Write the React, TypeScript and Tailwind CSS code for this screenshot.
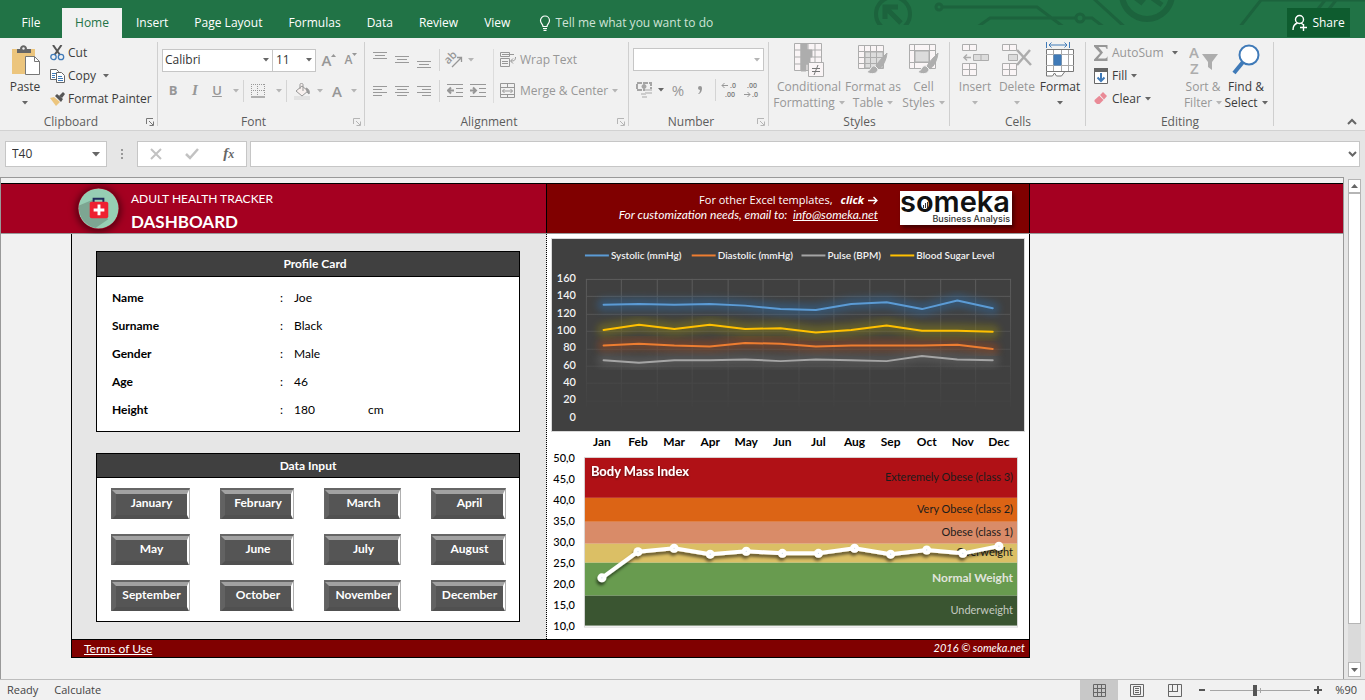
import { ReactNode } from 'react'

const months = ['January', 'February', 'March', 'April', 'May', 'June', 'July', 'August', 'September', 'October', 'November', 'December']

const profile = [
  { label: 'Name', value: 'Joe', unit: '' },
  { label: 'Surname', value: 'Black', unit: '' },
  { label: 'Gender', value: 'Male', unit: '' },
  { label: 'Age', value: '46', unit: '' },
  { label: 'Height', value: '180', unit: 'cm' },
]

const series = [
  { name: 'Systolic (mmHg)', color: '#5b9bd5', glow: '#2f6ca5', x: 33, data: [129, 130, 129, 130, 128, 124, 123, 130, 132, 124, 134, 125] },
  { name: 'Diastolic (mmHg)', color: '#ed7d31', glow: '#a04a1c', x: 140, data: [82, 84, 82, 81, 85, 84, 81, 82, 82, 82, 83, 78] },
  { name: 'Pulse (BPM)', color: '#a5a5a5', glow: '#6a6a6a', x: 250, data: [65, 62, 65, 65, 66, 64, 66, 65, 64, 70, 66, 65] },
  { name: 'Blood Sugar Level', color: '#ffc000', glow: '#8f8410', x: 339, data: [100, 106, 101, 106, 101, 102, 97, 100, 105, 99, 99, 98] },
]

const bands = [
  { label: 'Exteremely Obese (class 3)', y: 0, h: 40, fill: '#b01116', text: '#1c1c1c' },
  { label: 'Very Obese (class 2)', y: 40, h: 24, fill: '#dc6415', text: '#1c1c1c' },
  { label: 'Obese (class 1)', y: 64, h: 22, fill: '#d98b68', text: '#1c1c1c' },
  { label: 'Overweight', y: 86, h: 19, fill: '#dbbf65', text: '#1c1c1c' },
  { label: 'Normal Weight', y: 105, h: 33, fill: '#689b4f', text: '#e0e4dc', bold: true },
  { label: 'Underweight', y: 138, h: 30, fill: '#3a5531', text: '#c4cac0' },
]

const bmi = [21.6, 27.8, 28.6, 27.2, 27.9, 27.4, 27.4, 28.6, 27.2, 28.2, 27.4, 29.1]

function Caret({ color = '#666' }: { color?: string }) {
  return (
    <svg width="6" height="4" viewBox="0 0 6 4" className="shrink-0">
      <path d="M0 0h6L3 3.5z" fill={color} />
    </svg>
  )
}

function Group({ label, width, launcher, children }: { label: string; width: string; launcher?: string; children: ReactNode }) {
  return (
    <section aria-label={label} className={`relative flex h-[92px] shrink-0 flex-col ${width}`}>
      <div className="flex-1 pt-[3px]">{children}</div>
      <div className="flex h-4 items-center justify-center text-[#5c5c5c]">{label}</div>
      {launcher && (
        <button aria-label={`${label} settings`} className="absolute right-1 bottom-1">
          <svg width="8" height="8" viewBox="0 0 8 8" fill="none" stroke={launcher}>
            <path d="M.5 6V.5H7M3 3l4 4M7.5 3.5v4h-4" />
          </svg>
        </button>
      )}
      <span className="absolute top-1 right-0 h-[84px] w-px bg-[#cfcfcf]" />
    </section>
  )
}

function Cell({ label, children, width = 'w-[22px]' }: { label: string; children: ReactNode; width?: string }) {
  return (
    <button aria-label={label} className={`flex h-6 shrink-0 items-center justify-center text-[#979797] ${width}`}>
      {children}
    </button>
  )
}

function Divider() {
  return <span className="h-[22px] w-px shrink-0 bg-[#d4d4d4]" />
}

function Big({ icon, lines, width, dim }: { icon: ReactNode; lines: string[]; width: string; dim?: boolean }) {
  return (
    <button className={`flex shrink-0 flex-col items-center leading-4 ${width} ${dim ? 'text-[#979797]' : 'text-[#3c3c3c]'}`}>
      <span className="flex h-[38px] items-center">{icon}</span>
      <span className="whitespace-nowrap">{lines[0]}</span>
      <span className="flex h-4 items-center gap-1 whitespace-nowrap">
        {lines[1]}
        <Caret color={dim ? '#b5b5b5' : '#666'} />
      </span>
    </button>
  )
}

function Lines({ widths, align = 'left', y = 3 }: { widths: number[]; align?: string; y?: number }) {
  return (
    <svg width="14" height="17" viewBox="0 0 14 17" stroke="#9a9a9a">
      {widths.map((w, i) => {
        const x = align === 'left' ? 0 : align === 'right' ? 14 - w : (14 - w) / 2
        return <path key={i} d={`M${x} ${y + i * 3 + 0.5}h${w}`} />
      })}
    </svg>
  )
}

function Brush() {
  return (
    <>
      <path d="M29 9c-5 5-9 9-11 13l3 3c4-3 7-8 8-16z" fill="#aeaeae" />
      <path d="M17 22c-4-1-4 4-8 6 4 3 11 2 11-3z" fill="#aeaeae" stroke="#f1f1f1" />
    </>
  )
}

function CircuitArt() {
  return (
    <svg width="500" height="25" viewBox="865 0 500 25" fill="none" stroke="#1c633d" strokeWidth="3" className="absolute top-0 right-0" aria-hidden="true">
      <circle cx="893" cy="14" r="17" strokeWidth="4" />
      <path d="M901 23l-14-14M885 19V7h13" strokeWidth="5" />
      <circle cx="939" cy="7" r="3" />
      <path d="M943 7h94l28 21M976 28l14-10h86M1084 18h8l13 10M1093-2l35 32" />
      <circle cx="1080" cy="18" r="4" />
      <circle cx="1147" cy="-6" r="25" strokeWidth="6" />
      <path d="M1133-4l8 6 5-6M1148-5l14 10" strokeWidth="5" />
      <path d="M1239 28l22-28h104M1318 9l8-10M1329 9l8-10" />
    </svg>
  )
}

function TitleBar() {
  const tabs = ['Insert', 'Page Layout', 'Formulas', 'Data', 'Review', 'View']
  return (
    <header className="relative flex h-[38px] items-end bg-[#217346] text-white">
      <CircuitArt />
      <nav className="relative flex h-[30px] items-center">
        <button className="w-[62px] text-center">File</button>
        <button className="h-full w-[60px] bg-[#f1f1f1] text-center text-[#217346]">Home</button>
        <div className="flex pl-px">
          {tabs.map((t) => (
            <button key={t} className="px-[13px]">{t}</button>
          ))}
        </div>
        <button className="flex items-center gap-1 pl-4 text-[#cfe3d7]">
          <svg width="12" height="16" viewBox="1 0 12 16" fill="none" stroke="#fff" strokeWidth="1.200">
            <path d="M5 11.500c0-2.500-2.500-3-2.500-6a4.500 4.500 0 0 1 9 0c0 3-2.500 3.500-2.500 6zM5 13.500h4M5.500 15.300h3" />
          </svg>
          Tell me what you want to do
        </button>
      </nav>
      <button className="relative mr-[15px] mb-px ml-auto flex h-[29px] w-[63px] items-center justify-center gap-1 bg-[#0e5c2f]">
        <svg width="16" height="18" viewBox="0 0 16 18" fill="none" stroke="#fff" strokeWidth="1.400">
          <circle cx="7.500" cy="5.500" r="4" />
          <path d="M5.500 9C2.500 10 1 12 1 16M9 9l2 1.500M11.500 10v7M8 13.500h7" />
        </svg>
        Share
      </button>
    </header>
  )
}

function ClipboardGroup() {
  return (
    <Group label="Clipboard" width="w-[158px] pr-4" launcher="#777">
      <div className="flex">
        <Big
          width="w-[50px]"
          lines={['Paste', '']}
          icon={
            <svg width="30" height="31" viewBox="0 0 30 31">
              <path d="M2 4h23v25H2z" fill="#ecc57d" />
              <path d="M7 8V4h3c0-5 7-5 7 0h4v4z" fill="#666" />
              <circle cx="13.500" cy="3.500" r="1.200" fill="#f1f1f1" />
              <path d="M15.500 11.500h9l5 5v13h-14z" fill="#fff" stroke="#777" />
              <path d="M24.500 11.500v5h5" fill="none" stroke="#777" />
            </svg>
          }
        />
        <div className="text-[#3c3c3c]">
          <button className="flex h-[23px] items-center gap-[3px]">
            <svg width="15" height="16" viewBox="0 0 15 16" fill="none">
              <path d="M3 0l7 10M11.500 0l-7 10" stroke="#555" strokeWidth="2" />
              <circle cx="3.500" cy="12" r="2.700" stroke="#3f7ab8" strokeWidth="1.300" />
              <circle cx="11" cy="12" r="2.700" stroke="#3f7ab8" strokeWidth="1.300" />
            </svg>
            Cut
          </button>
          <button className="flex h-[23px] items-center gap-[3px]">
            <svg width="15" height="14" viewBox="0 0 15 14" fill="#fff" stroke="#666">
              <path d="M.5.500h6l2 2v8h-8z" />
              <path d="M2 4.500h4M2 6.500h3M2 8.500h3" stroke="#3f7ab8" />
              <path d="M6.500 3.500h5l3 3v7h-8z" />
              <path d="M8 7.500h4M8 9.500h5M8 11.500h5" stroke="#3f7ab8" />
            </svg>
            Copy
            <span className="pl-1"><Caret /></span>
          </button>
          <button className="flex h-[23px] items-center gap-[3px] whitespace-nowrap">
            <svg width="15" height="14" viewBox="0 0 15 14">
              <path d="M0 6l4-1 6 5-4 4z" fill="#ecc57d" />
              <path d="M5 4l2-2 6 5-2 3z" fill="#555" />
              <path d="M9 4l4-4 2 2-3 4z" fill="#555" />
            </svg>
            Format Painter
          </button>
        </div>
      </div>
    </Group>
  )
}

function FontGroup() {
  return (
    <Group label="Font" width="w-[207px] pr-4" launcher="#b5b5b5">
      <div className="flex items-center pt-[7px] pl-1">
        <div className="relative flex items-center">
          <select aria-label="Font name" className="h-[23px] w-[111px] appearance-none border border-[#c6c6c6] bg-white pl-[2px] text-[#333]">
            <option>Calibri</option>
          </select>
          <span className="pointer-events-none absolute right-1"><Caret /></span>
        </div>
        <div className="relative flex items-center">
          <select aria-label="Font size" className="h-[23px] w-[43px] appearance-none border border-l-0 border-[#c6c6c6] bg-white pl-[3px] text-[#333]">
            <option>11</option>
          </select>
          <span className="pointer-events-none absolute right-1"><Caret /></span>
        </div>
        <Cell label="Increase font size">
          <span className="pl-1 text-[15px] font-semibold">A</span>
          <svg width="5" height="12" viewBox="0 0 5 12"><path d="M0 3h5L2.500 0z" fill="#979797" /></svg>
        </Cell>
        <Cell label="Decrease font size">
          <span className="pl-1 text-xs font-semibold">A</span>
          <svg width="5" height="14" viewBox="0 0 5 14"><path d="M0 0h5L2.500 3z" fill="#979797" /></svg>
        </Cell>
      </div>
      <div className="flex items-center pt-[7px] pl-1">
        <Cell label="Bold"><b className="text-[13px]">B</b></Cell>
        <Cell label="Italic"><i className="font-['Liberation_Serif',serif] text-[15px] font-bold">I</i></Cell>
        <Cell label="Underline"><u className="text-[13px] font-semibold">U</u></Cell>
        <Cell label="Underline styles" width="w-[15px]"><Caret color="#b5b5b5" /></Cell>
        <Divider />
        <Cell label="Borders" width="w-[28px]">
          <svg width="14" height="14" viewBox="0 0 14 14" fill="none" stroke="#999">
            <path d="M.5 0v12M6.500 0v12M13.500 0v12M0 .5h14M0 6.500h14" strokeDasharray="1 1" />
            <path d="M0 13h14" strokeWidth="1.500" />
          </svg>
        </Cell>
        <Cell label="Border styles" width="w-[14px]"><Caret color="#b5b5b5" /></Cell>
        <Divider />
        <Cell label="Fill color" width="w-[30px]">
          <svg width="17" height="17" viewBox="0 0 17 17" fill="none" stroke="#999">
            <path d="M0 15h16" strokeWidth="4" stroke="#e2e2e2" />
            <path d="M2 8l6-5 6 5-6 5zM6 6V1.500C6 0 9 0 9 1.500V8" fill="#f7f0ee" />
            <path d="M12 5c3 1 4 4 3 6-2-1-2-3-3-6z" fill="#999" />
          </svg>
        </Cell>
        <Cell label="Fill colors" width="w-[6px]"><Caret color="#b5b5b5" /></Cell>
        <Cell label="Font color" width="w-[28px]"><span className="text-[15px] font-semibold">A</span></Cell>
        <Cell label="Font colors" width="w-[6px]"><Caret color="#b5b5b5" /></Cell>
      </div>
    </Group>
  )
}

function AlignmentGroup() {
  return (
    <Group label="Alignment" width="w-[264px] pr-4" launcher="#b5b5b5">
      <div className="flex pl-1 text-[#979797]">
        <div className="flex flex-col gap-[7px] pt-[7px]">
          <div className="flex items-center">
            <Cell label="Top align"><Lines widths={[14, 10, 14]} align="center" y={0} /></Cell>
            <Cell label="Middle align"><Lines widths={[14, 10, 14]} align="center" y={4} /></Cell>
            <Cell label="Bottom align"><Lines widths={[14, 10, 14]} align="center" y={9} /></Cell>
            <span className="pl-1" />
            <Divider />
            <Cell label="Orientation" width="w-[28px]">
              <svg width="20" height="20" viewBox="0 0 20 20" fill="none" stroke="#979797" className="overflow-visible">
                <text x="1" y="11" transform="rotate(-45 7 9)" fontSize="11" fontWeight="600" fill="#979797" stroke="none">ab</text>
                <path d="M8 17l9-9M13 7.500h4.500V12" strokeWidth="1.300" />
              </svg>
            </Cell>
            <Caret color="#b5b5b5" />
          </div>
          <div className="flex items-center">
            <Cell label="Align left"><Lines widths={[14, 9, 14, 9]} /></Cell>
            <Cell label="Center"><Lines widths={[14, 10, 14, 10]} align="center" /></Cell>
            <Cell label="Align right"><Lines widths={[14, 9, 14, 9]} align="right" /></Cell>
            <span className="pl-1" />
            <Divider />
            <Cell label="Decrease indent" width="w-[30px]">
              <svg width="17" height="14" viewBox="0 0 17 14" stroke="#979797" fill="none">
                <path d="M0 .5h16M9 4.500h7M9 8.500h7M0 12.500h16" />
                <path d="M1 6.500h6M4 3.500l-3 3 3 3" strokeWidth="2" />
              </svg>
            </Cell>
            <Cell label="Increase indent" width="w-[17px]">
              <svg width="17" height="14" viewBox="0 0 17 14" stroke="#979797" fill="none">
                <path d="M0 .5h16M9 4.500h7M9 8.500h7M0 12.500h16" />
                <path d="M0 6.500h6M3 3.500l3 3-3 3" strokeWidth="2" />
              </svg>
            </Cell>
          </div>
        </div>
        <span className="mt-2 ml-auto h-[54px] w-px shrink-0 bg-[#dcdcdc]" />
        <div className="-mr-4 flex w-[135px] shrink-0 flex-col gap-[7px] pt-[7px] pl-[6px]">
          <button className="flex h-6 items-center gap-1 whitespace-nowrap">
            <svg width="16" height="16" viewBox="0 0 16 16" stroke="#979797" fill="none">
              <path d="M.5.500h9v4h-9zM2 2.500h12M.5 6.500h9v8h-9zM2 9.500h6M2 11.500h6M15.500 5c0 3-1 4-4.500 4M13 6.500L10.500 9l2.500 2.500" />
            </svg>
            Wrap Text
          </button>
          <button className="flex h-6 items-center gap-1 whitespace-nowrap">
            <svg width="16" height="16" viewBox="0 0 16 16" stroke="#979797" fill="none">
              <path d="M.5.500h14v14H.5zM.5 4.500h14M.5 11.500h14M7.500 0v4M7.500 11v4M2.500 8h10M4.500 6L2.500 8l2 2M10.500 6l2 2-2 2" />
            </svg>
            Merge &amp; Center
            <Caret color="#b5b5b5" />
          </button>
        </div>
      </div>
    </Group>
  )
}

function NumberGroup() {
  return (
    <Group label="Number" width="w-[140px] pr-4" launcher="#b5b5b5">
      <div className="-mr-4 flex flex-col gap-[7px] pt-[7px] pl-1">
        <div className="relative flex h-[23px] w-[131px] items-center">
          <select aria-label="Number format" className="h-[23px] w-full appearance-none border border-[#c6c6c6] bg-white" defaultValue="">
            <option value="" aria-label="None"></option>
          </select>
          <span className="pointer-events-none absolute right-1"><Caret color="#b5b5b5" /></span>
        </div>
        <div className="flex items-center">
          <Cell label="Accounting format">
            <svg width="17" height="16" viewBox="0 0 17 16" fill="none" stroke="#a5a5a5">
              <path d="M1 1h14v7H1z" strokeWidth="2" strokeDasharray="5 1" />
              <circle cx="8" cy="4.500" r="2" fill="#a5a5a5" />
              <path d="M9 8h7M9 11h7M5 12h5M6 15h5" stroke="#ccc" strokeWidth="2" />
            </svg>
          </Cell>
          <Cell label="Currencies" width="w-[12px]"><Caret /></Cell>
          <Cell label="Percent"><span className="text-[15px]">%</span></Cell>
          <Cell label="Comma">
            <svg width="6" height="8" viewBox="0 0 6 8"><path d="M1 2a2 2 0 1 1 4 0c0 3-1 5-3 6H1c1-1 2-2 2-4-1 0-2-1-2-2z" fill="#979797" /></svg>
          </Cell>
          <span className="pl-1" />
          <Divider />
          <Cell label="Increase decimal" width="w-[26px]">
            <svg width="16" height="18" viewBox="0 0 16 18" fill="#7a7a7a" fontSize="7" fontWeight="600">
              <text x="9" y="7">.0</text>
              <text x="4" y="16">.00</text>
              <path d="M1 4.500h6M3.500 2L1 4.500 3.500 7" fill="none" stroke="#979797" />
            </svg>
          </Cell>
          <Cell label="Decrease decimal" width="w-[18px]">
            <svg width="16" height="18" viewBox="0 0 16 18" fill="#7a7a7a" fontSize="7" fontWeight="600">
              <text x="4" y="7">.00</text>
              <text x="9" y="16">.0</text>
              <path d="M1 13.500h6M4.500 11L7 13.500 4.500 16" fill="none" stroke="#979797" />
            </svg>
          </Cell>
        </div>
      </div>
    </Group>
  )
}

function StylesGroup() {
  return (
    <Group label="Styles" width="w-[181px]">
      <div className="flex pl-[6px]">
        <Big
          dim
          width="w-[68px]"
          lines={['Conditional', 'Formatting']}
          icon={
            <svg width="30" height="34" viewBox="0 0 30 34" fill="#faf5f6" stroke="#adadad">
              <path d="M.5.500h27v27H.5z" />
              <path d="M7 0h6v7H7zM7 7h11v7H7zM7 14h9v7H7zM7 21h5v7H7z" fill="#adadad" />
              <path d="M0 7h28M0 14h28M0 21h28M7 0v28M14 0v28M21 0v28" />
              <path d="M14.500 19.500h15v14h-15z" />
              <path d="M18 25.500h8M18 28.500h8M24 22l-4 10" stroke="#777" />
            </svg>
          }
        />
        <Big
          dim
          width="w-[60px]"
          lines={['Format as', 'Table']}
          icon={
            <svg width="30" height="32" viewBox="0 0 30 32" fill="#faf5f6" stroke="#adadad">
              <path d="M.5 1.500h25v23H.5z" />
              <path d="M7 8h18v16H7z" fill="#dcdcdc" />
              <path d="M0 7.500h26M0 13.500h26M0 19.500h26M6.500 1v23M12.500 1v23M18.500 1v23" />
              <Brush />
            </svg>
          }
        />
        <Big
          dim
          width="w-[41px]"
          lines={['Cell', 'Styles']}
          icon={
            <svg width="30" height="32" viewBox="0 0 30 32" fill="#faf5f6" stroke="#adadad">
              <path d="M.5.500h26v24H.5zM0 6.500h27M0 18.500h27M5.500 0v24M20.500 0v24" />
              <path d="M6 7h14v11H6z" fill="#dcdcdc" />
              <Brush />
            </svg>
          }
        />
      </div>
    </Group>
  )
}

function CellsGroup() {
  return (
    <Group label="Cells" width="w-[136px]">
      <div className="flex pl-1">
        <Big
          dim
          width="w-[42px]"
          lines={['Insert', '']}
          icon={
            <svg width="27" height="32" viewBox="0 0 27 32" fill="#faf5f6" stroke="#adadad">
              <path d="M.5.500h14v6H.5zM7.500 0v6M.5 19.500h14v12H.5zM7.500 19v12M0 25.500h15" />
              <path d="M11.500 10.500h15v6h-15zM19 10v6" fill="#dcdcdc" />
              <path d="M2 13.500h7M5 10.500l-3 3 3 3" fill="none" strokeWidth="1.500" />
            </svg>
          }
        />
        <Big
          dim
          width="w-[42px]"
          lines={['Delete', '']}
          icon={
            <svg width="30" height="32" viewBox="0 0 30 32" fill="#faf5f6" stroke="#adadad">
              <path d="M.5.500h14v6H.5zM7.500 0v6M.5 19.500h14v12H.5zM7.500 19v12M0 25.500h15" />
              <path d="M6.500 10.500h9v6h-9z" fill="#dcdcdc" />
              <path d="M15 6l14 15M28 6L15 21" fill="none" strokeWidth="2.500" />
            </svg>
          }
        />
        <Big
          width="w-[44px]"
          lines={['Format', '']}
          icon={
            <svg width="29" height="36" viewBox="0 0 29 36" fill="#fff" stroke="#777">
              <path d="M.5 7.500h27v22H.5z" />
              <path d="M0 12.500h28M0 23.500h28M7.500 8v21M15.500 8v21M22.500 8v21" stroke="#aaa" />
              <path d="M8 13h7v10H8z" fill="#3f7ab8" stroke="#3f7ab8" />
              <path d="M.5 30v4h6l2-3 2 3h5l3-4" />
              <path d="M.5 0v6M23.500 0v6M3 3h18M5.500.500L3 3l2.500 2.500M18.500.500L21 3l-2.500 2.500" fill="none" stroke="#3f7ab8" />
            </svg>
          }
        />
      </div>
    </Group>
  )
}

function EditingGroup() {
  return (
    <Group label="Editing" width="w-[188px]">
      <div className="flex pl-2 text-[#3c3c3c]">
        <div className="w-[84px]">
          <button className="flex h-[23px] w-full items-center gap-1 text-[#979797]">
            <svg width="14" height="16" viewBox="0 0 14 16"><path d="M0 0h13.500v4h-1c0-1.500-1-2-2-2H4.500L9 7.500 4 13.500h7c1.500 0 2-1 2.500-2.500v5H0v-1.500L6 8 0 1.500z" fill="#979797" /></svg>
            AutoSum
            <span className="ml-auto"><Caret /></span>
          </button>
          <button className="flex h-[23px] items-center gap-1">
            <svg width="14" height="16" viewBox="0 0 14 16" fill="#fff" stroke="#666">
              <path d="M.5.500h13v15H.5z" />
              <path d="M0 2h14" strokeWidth="4" />
              <path d="M7 5v8M3.500 9.500L7 13l3.500-3.500" fill="none" stroke="#3f7ab8" strokeWidth="2" />
            </svg>
            Fill
            <Caret />
          </button>
          <button className="flex h-[23px] items-center gap-1">
            <svg width="14" height="14" viewBox="0 0 14 14"><path d="M6 3l3-3 4 4-3 3.500zM5.300 3.700L9.500 8l-4 4H3L.5 9.500V8z" fill="#e98a96" /></svg>
            Clear
            <Caret />
          </button>
        </div>
        <div className="flex pl-1">
          <Big
            dim
            width="w-[42px]"
            lines={['Sort &', 'Filter']}
            icon={
              <svg width="29" height="36" viewBox="0 0 29 36" fill="#adadad">
                <path d="M13 12h16l-6 8v8l-4-3v-5z" />
                <text x="0" y="16" fontSize="15" fontWeight="600">A</text>
                <text x="1" y="32" fontSize="15" fontWeight="600">Z</text>
              </svg>
            }
          />
          <Big
            width="w-[44px]"
            lines={['Find &', 'Select']}
            icon={
              <svg width="28" height="32" viewBox="0 0 28 32" fill="none" stroke="#3f7ab8">
                <path d="M11 18L2 29" strokeWidth="4" />
                <circle cx="17" cy="11" r="9.500" fill="#fff" strokeWidth="2" />
              </svg>
            }
          />
        </div>
      </div>
    </Group>
  )
}

function Ribbon() {
  return (
    <div className="flex border-b border-[#d2d2d2] bg-[#f1f1f1]">
      <ClipboardGroup />
      <FontGroup />
      <AlignmentGroup />
      <NumberGroup />
      <StylesGroup />
      <CellsGroup />
      <EditingGroup />
      <button aria-label="Collapse ribbon" className="mr-2 mb-1 ml-auto self-end">
        <svg width="10" height="8" viewBox="0 0 10 8" fill="none" stroke="#666" strokeWidth="2"><path d="M1 6l4-4 4 4" /></svg>
      </button>
    </div>
  )
}

function FormulaBar() {
  return (
    <div className="flex items-center px-[5px] pt-[10px] pb-[10px]">
      <div className="flex h-[26px] w-[102px] items-center border border-[#c6c6c6] bg-white pr-[6px]">
        <input aria-label="Name box" defaultValue="T40" className="w-full min-w-0 bg-transparent pl-[6px] text-[#333] outline-none" />
        <button aria-label="Named ranges">
          <svg width="8" height="5" viewBox="0 0 8 5"><path d="M0 0h8L4 4.500z" fill="#666" /></svg>
        </button>
      </div>
      <svg width="30" height="12" viewBox="0 0 30 12" fill="#999"><path d="M14 1h2v2h-2zM14 5h2v2h-2zM14 9h2v2h-2z" /></svg>
      <div className="flex h-[26px] w-[110px] items-center justify-around border border-[#c6c6c6] bg-white">
        <button aria-label="Cancel">
          <svg width="12" height="12" viewBox="0 0 12 12" stroke="#c2c2c2" strokeWidth="2"><path d="M1 1l10 10M11 1L1 11" /></svg>
        </button>
        <button aria-label="Enter">
          <svg width="14" height="12" viewBox="0 0 14 12" fill="none" stroke="#c2c2c2" strokeWidth="2.500"><path d="M1 6l4 4 8-9" /></svg>
        </button>
        <button aria-label="Insert function" className="font-['Liberation_Serif',serif] text-[15px] font-bold text-[#666] italic">
          f<span className="text-xs">x</span>
        </button>
      </div>
      <div className="ml-[3px] flex h-[26px] flex-1 items-center border border-[#c6c6c6] bg-white pr-[2px]">
        <input aria-label="Formula" className="h-full w-full bg-transparent px-2 outline-none" />
        <button aria-label="Expand formula bar">
          <svg width="9" height="7" viewBox="0 0 9 7" fill="none" stroke="#666" strokeWidth="2"><path d="M1 1l3.500 3.500L8 1" /></svg>
        </button>
      </div>
    </div>
  )
}

function SheetHeader() {
  return (
    <div className="flex h-[51px] border-t border-b border-t-black border-b-[#999] bg-[#a50021] text-white">
      <div className="flex w-[545px] shrink-0 pt-1 pl-[77px]">
        <svg width="41" height="41" viewBox="0 0 42 42" className="shrink-0 rounded-full shadow-[0_1px_7px_2px_rgba(0,0,0,0.5)]">
          <circle cx="21" cy="21" r="20.500" fill="#96ceb4" />
          <path d="M1 18l14-6 16 20-13 9C8 39 0 30 1 18z" fill="#7da692" />
          <path d="M16 15v-4h10v4" fill="none" stroke="#1f2c5c" strokeWidth="2" />
          <rect x="12" y="14" width="19" height="17" rx="2" fill="#ee2030" />
          <path d="M21.500 17v11M16 22.500h11" stroke="#fff" strokeWidth="3" />
        </svg>
        <div className="pl-3">
          <div className="text-xs leading-[22px]">ADULT HEALTH TRACKER</div>
          <h1 className="text-[17px] leading-6 font-bold">DASHBOARD</h1>
        </div>
      </div>
      <div className="flex w-[484px] shrink-0 border-r border-l border-black bg-[#800000]">
        <div className="flex-1 pt-2 text-right">
          <p className="flex items-center justify-end gap-2 font-['Open_Sans',sans-serif] text-[11px] leading-4">
            <span>For other Excel templates,</span>
            <a href="#" className="font-bold italic">click</a>
            <svg width="10" height="9" viewBox="0 0 10 9" fill="none" stroke="#fff" strokeWidth="1.300" className="-ml-1"><path d="M0 4.500h9M5.500 1L9 4.500 5.500 8" /></svg>
          </p>
          <p className="leading-[14px] italic">
            For customization needs, email to:&nbsp; <a href="#" className="underline">info@someka.net</a>
          </p>
        </div>
        <svg width="112" height="34" viewBox="0 0 112 34" className="mx-[17px] mt-[7px] ml-[22px] bg-white shadow-[2px_3px_4px_rgba(0,0,0,0.5)]" fill="#111" fontFamily="Inter, sans-serif">
          <text x="0" y="21" fontSize="29" fontWeight="600">someka</text>
          <text x="110" y="31" fontSize="9" fontWeight="500" textAnchor="end" fill="#333">Business Analysis</text>
          <path d="M23.500 17v-3M25.500 17v-5M27.500 17v-6" stroke="#333" />
        </svg>
      </div>
    </div>
  )
}

function ProfileCard() {
  return (
    <section className="border border-black bg-white pb-[7px]">
      <h2 className="border-b border-black bg-[#404040] pl-[14px] text-center leading-6 font-bold text-white">Profile Card</h2>
      <table className="mt-[7px] w-full text-left">
        <tbody>
          {profile.map((p) => (
            <tr key={p.label} className="h-7">
              <th scope="row" className="w-[183px] pl-[15px] font-bold">{p.label}</th>
              <td className="w-[14px]">:</td>
              <td className="w-[74px]">{p.value}</td>
              <td>{p.unit}</td>
            </tr>
          ))}
        </tbody>
      </table>
    </section>
  )
}

function DataInput() {
  return (
    <section className="border border-black bg-white pb-[10px]">
      <h2 className="border-b border-black bg-[#404040] text-center leading-[23px] font-bold text-white">Data Input</h2>
      <div className="grid grid-cols-[79px_74px_77px_75px] justify-between gap-y-[15px] pt-[10px] pr-[13px] pl-[14px]">
        {months.map((m) => (
          <button key={m} className="border-t-2 border-r border-l border-[#666] border-r-[#b0b0b0] bg-[#555]">
            <span className="block h-[29px] border-t-4 border-r-2 border-b-4 border-l-4 border-t-[#a2a2a2] border-r-white border-b-[#505050] border-l-[#626262] leading-[18px] font-bold text-white">
              {m}
            </span>
          </button>
        ))}
      </div>
    </section>
  )
}

function VitalsChart() {
  const px = (i: number) => 51.7 + i * 35.45
  const py = (v: number) => 178 - v * 0.869
  return (
    <svg viewBox="0 0 473 192" className="block w-full bg-[#404040] outline outline-[#d9d9d9]" role="img" aria-label="Blood pressure, pulse and sugar">
      <defs>
        <filter id="glow" x="-10%" y="-100%" width="120%" height="300%">
          <feGaussianBlur stdDeviation="3.500" />
        </filter>
        <linearGradient id="fade" gradientUnits="userSpaceOnUse" x1="0" y1="40" x2="0" y2="172">
          <stop offset="0" stopColor="#5c5c5c" />
          <stop offset="1" stopColor="#414141" />
        </linearGradient>
      </defs>
      {series.map((s) => (
        <g key={s.name}>
          <path d={`M${s.x} 16.500h24`} stroke={s.color} strokeWidth="2" />
          <text x={s.x + 26} y="20" fontSize="10" fontWeight="600" fill="#f2f2f2">{s.name}</text>
        </g>
      ))}
      {Array.from({ length: 9 }, (_, i) => (
        <text key={i} x="24" y={43 + i * 17.4} fontSize="11" fontWeight="600" textAnchor="end" fill="#f2f2f2">{160 - i * 20}</text>
      ))}
      {Array.from({ length: 8 }, (_, i) => (
        <rect key={i} x="34" y={Math.round(40 + i * 17.4)} width="426" height="1" fill="url(#fade)" />
      ))}
      {Array.from({ length: 13 }, (_, i) => (
        <rect key={i} x={Math.round(34 + i * 35.45)} y="40" width="1" height="128" fill="url(#fade)" />
      ))}
      {series.map((s) => {
        const points = s.data.map((v, i) => `${px(i)},${py(v)}`).join(' ')
        return (
          <g key={s.name} fill="none" strokeLinejoin="round" strokeLinecap="round">
            <polyline points={points} stroke={s.glow} strokeWidth="13" opacity="0.450" filter="url(#glow)" />
            <polyline points={points} stroke={s.color} strokeWidth="2" />
          </g>
        )
      })}
    </svg>
  )
}

function BmiChart() {
  const px = (i: number) => 50 + i * 36.17
  const py = (v: number) => 27 + (50 - v) * 4.23
  const points = bmi.map((v, i) => `${px(i)},${py(v)}`).join(' ')
  return (
    <svg viewBox="0 0 473 204" className="block w-full" role="img" aria-label="Body mass index by month">
      <defs>
        <filter id="shadow" x="-10%" y="-50%" width="120%" height="200%">
          <feDropShadow dx="-1" dy="3" stdDeviation="1.500" floodColor="#000" floodOpacity="0.550" />
        </filter>
        <filter id="text-shadow" x="-10%" y="-50%" width="120%" height="200%">
          <feDropShadow dx="0" dy="1" stdDeviation="1" floodColor="#000" floodOpacity="0.600" />
        </filter>
      </defs>
      {months.map((m, i) => (
        <text key={m} x={50 + i * 36.17} y="15" fontSize="12" fontWeight="700" textAnchor="middle">{m.slice(0, 3)}</text>
      ))}
      {Array.from({ length: 9 }, (_, i) => (
        <text key={i} x="23" y={31 + i * 21.1} fontSize="11" fontWeight="500" textAnchor="end">{50 - i * 5},0</text>
      ))}
      <rect x="32.500" y="26.500" width="434" height="170" fill="#fff" stroke="#d9d9d9" />
      {bands.map((b) => (
        <g key={b.label}>
          <rect x="33" y={27 + b.y} width="433" height={b.h} fill={b.fill} />
          <text x="462" y={30 + b.y + b.h / 2} fontSize={b.bold ? 12 : 11} fontWeight={b.bold ? 700 : 400} textAnchor="end" fill={b.text}>{b.label}</text>
        </g>
      ))}
      <text x="39" y="45" fontSize="13" fontWeight="700" fill="#fff" filter="url(#text-shadow)">Body Mass Index</text>
      <g filter="url(#shadow)">
        <polyline points={points} fill="none" stroke="#fff" strokeWidth="4" strokeLinejoin="round" />
        {bmi.map((v, i) => (
          <circle key={i} cx={px(i)} cy={py(v)} r="4.500" fill="#fff" />
        ))}
      </g>
      {bmi.map((v, i) => (
        <circle key={i} cx={px(i)} cy={py(v)} r="0.600" fill="#c4d4e4" />
      ))}
    </svg>
  )
}

function Sheet() {
  return (
    <main className="flex-1 overflow-hidden border-t border-r border-l border-[#999] bg-[#f1f1f1] pt-[5px] font-['Lato',sans-serif] text-black">
      <SheetHeader />
      <div className="ml-[70px] w-[959px] border-r border-l border-black">
        <div className="flex">
          <div className="flex w-[475px] flex-col gap-[21px] border-r border-dotted border-black bg-[#e6e6e6] pt-[17px] pr-[26px] pb-[17px] pl-6">
            <ProfileCard />
            <DataInput />
          </div>
          <div className="flex-1 bg-white px-[5px] pt-[5px]">
            <VitalsChart />
            <BmiChart />
          </div>
        </div>
        <footer className="flex h-[19px] items-center justify-between border-t border-b border-black bg-[#800000] pr-1 pl-3 text-white">
          <a href="#" className="underline">Terms of Use</a>
          <span className="text-[11px] italic">2016 © someka.net</span>
        </footer>
      </div>
    </main>
  )
}

function ScrollBar() {
  return (
    <div className="flex w-[21px] shrink-0 flex-col px-1 pt-[2px] pb-[2px]">
      <button aria-label="Scroll up" className="flex h-[14px] items-center justify-center border border-[#b5b5b5] bg-white">
        <svg width="7" height="4" viewBox="0 0 7 4"><path d="M0 4h7L3.500 0z" fill="#666" /></svg>
      </button>
      <div className="flex-1 bg-[#dadada]">
        <div className="h-[92%] border border-[#b5b5b5] bg-white" />
      </div>
      <button aria-label="Scroll down" className="flex h-[15px] items-center justify-center border border-[#b5b5b5] bg-white">
        <svg width="7" height="4" viewBox="0 0 7 4"><path d="M0 0h7L3.500 4z" fill="#666" /></svg>
      </button>
    </div>
  )
}

function StatusBar() {
  return (
    <footer className="flex h-[21px] items-center border-t border-[#bdbdbd] bg-[#f1f1f1] pl-[7px] text-[11px] text-[#444]">
      <span>Ready</span>
      <span className="pl-4">Calculate</span>
      <div className="ml-auto flex h-full items-center">
        <button aria-label="Normal view" className="flex h-full w-[38px] items-center justify-center bg-[#c8c8c8]">
          <svg width="13" height="13" viewBox="0 0 13 13" fill="none" stroke="#666"><path d="M.5.500h12v12H.5zM0 4.500h13M0 8.500h13M4.500 0v13M8.500 0v13" /></svg>
        </button>
        <button aria-label="Page layout view" className="flex h-full w-[38px] items-center justify-center">
          <svg width="14" height="13" viewBox="0 0 14 13" fill="none" stroke="#666"><path d="M.5.500h13v12H.5zM3.500 2.500h7v8h-7zM5 4.500h4M5 6.500h4M5 8.500h4" /></svg>
        </button>
        <button aria-label="Page break view" className="flex h-full w-[38px] items-center justify-center">
          <svg width="14" height="13" viewBox="0 0 14 13" fill="none" stroke="#666"><path d="M.5.500h13v12H.5zM4.500 0v7M9.500 0v7.500M0 7.500h10" /></svg>
        </button>
        <button aria-label="Zoom out" className="flex w-4 justify-center">
          <svg width="6" height="2" viewBox="0 0 6 2"><path d="M0 0h6v2H0z" fill="#555" /></svg>
        </button>
        <div className="relative flex h-full w-[100px] items-center">
          <span className="absolute inset-x-0 h-px bg-[#a5a5a5]" />
          <span className="absolute left-1/2 h-[5px] w-px bg-[#a5a5a5]" />
          <input
            type="range"
            aria-label="Zoom"
            min="10"
            max="190"
            defaultValue="90"
            className="relative w-full appearance-none bg-transparent [&::-webkit-slider-thumb]:h-[11px] [&::-webkit-slider-thumb]:w-1 [&::-webkit-slider-thumb]:appearance-none [&::-webkit-slider-thumb]:bg-[#555]"
          />
        </div>
        <button aria-label="Zoom in" className="flex w-4 justify-center">
          <svg width="8" height="8" viewBox="0 0 8 8" stroke="#555" strokeWidth="2"><path d="M4 0v8M0 4h8" /></svg>
        </button>
        <span className="w-[39px] pr-2 text-right">%90</span>
      </div>
    </footer>
  )
}

export default function App() {
  return (
    <div className="flex min-h-screen flex-col bg-[#e6e6e6] font-['Open_Sans',sans-serif] text-xs">
      <TitleBar />
      <Ribbon />
      <FormulaBar />
      <div className="flex flex-1">
        <Sheet />
        <ScrollBar />
      </div>
      <StatusBar />
    </div>
  )
}
